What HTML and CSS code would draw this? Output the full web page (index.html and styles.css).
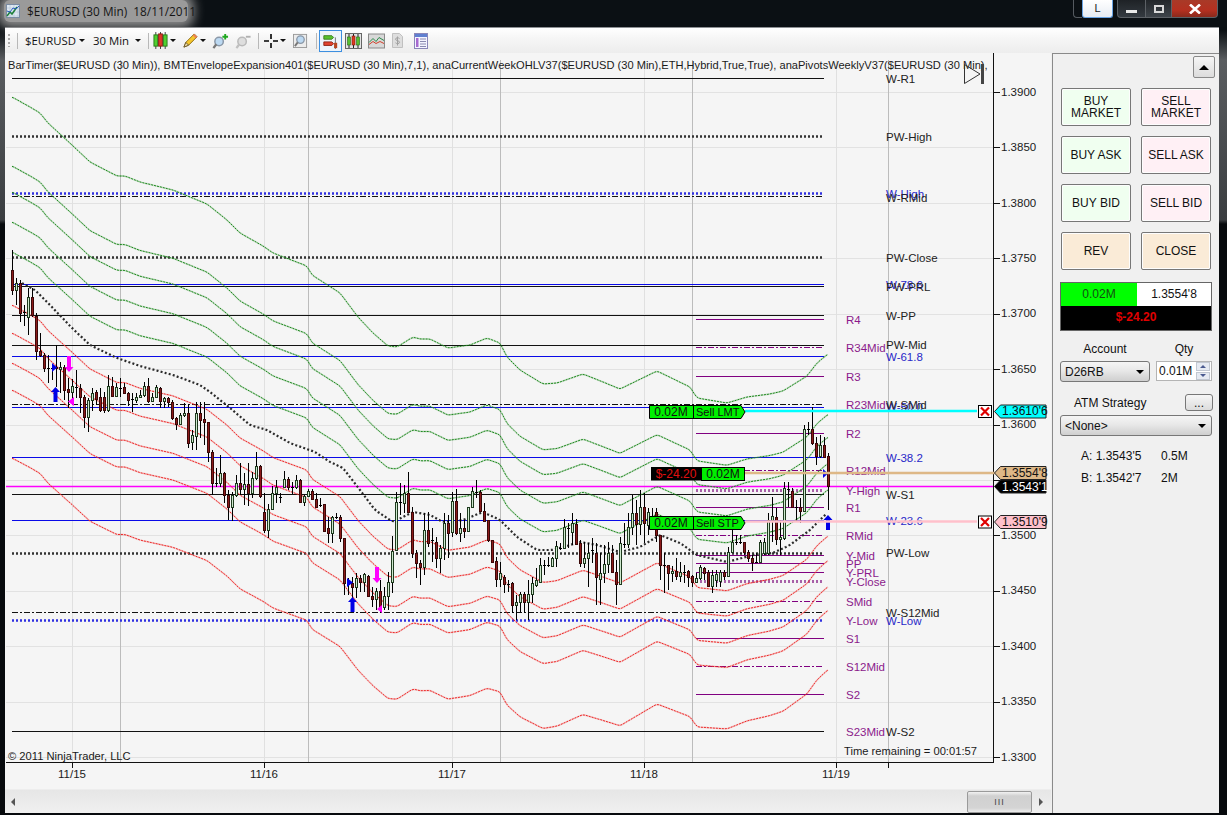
FILE: index.html
```html
<!DOCTYPE html>
<html lang="en">
<head>
<meta charset="utf-8">
<title>$EURUSD (30 Min) 18/11/2011</title>
<link rel="stylesheet" href="styles.css">
</head>
<body>
<header class="titlebar">
  <div class="title">
    <svg class="app-icon" viewBox="0 0 14 14"><rect x=".5" y=".5" width="13" height="13" fill="#dfe8f2" stroke="#7a8ca3"/><path d="M1 4h12M1 8h12M1 12h12M4 1v12M8 1v12M12 1v12" stroke="#b4c2d4" stroke-width=".6"/><path d="M1 12l3-4 2 2 5-7" fill="none" stroke="#1f7f3a" stroke-width="1.5"/><path d="M1 7l3 1 3-4 3 1 3-3" fill="none" stroke="#2b5fc0" stroke-width="1"/></svg>
    <span>$EURUSD (30 Min)&nbsp; 18/11/2011</span>
  </div>
  <div class="caption">
    <div class="cap-stub"></div>
    <div class="cap-l">L</div>
    <div class="cap-btn cap-min"><i></i></div>
    <div class="cap-btn cap-max"><i></i></div>
    <div class="cap-btn cap-close">
      <svg viewBox="0 0 12 10" width="12" height="10"><path d="M1 0.5l10 9M11 0.5l-10 9" stroke="#fff" stroke-width="2.6"/></svg>
    </div>
  </div>
</header>

<div class="window">
  <nav class="toolbar">
    <span class="grip"></span><span class="sep"></span>
    <span class="tool-text">$EURUSD</span><span class="caret c1"></span>
    <span class="tool-text t2">30 Min</span><span class="caret c2"></span>
    <span class="sep s2"></span>
    <svg class="ico w15" viewBox="0 0 16 18"><path d="M3 0v18M8 0v18M13 0v18" stroke="#333"/><rect x="1" y="3" width="4" height="12" fill="#4fd02f" stroke="#2a7a1a"/><rect x="6" y="2" width="4" height="13" fill="#e23a2a" stroke="#8a1a10"/><rect x="11" y="3" width="4" height="12" fill="#4fd02f" stroke="#2a7a1a"/></svg>
    <span class="caret"></span>
    <svg class="ico w15 gap7" viewBox="0 0 16 16"><path d="M1 15l2-5L12 1l3 3-9 9z" fill="#f6c62b" stroke="#8a6a10"/><path d="M1 15l2-5 3 3z" fill="#f2dfb0" stroke="#6a5a30"/><path d="M12 1l3 3-1.5 1.5-3-3z" fill="#ef7d5a"/></svg>
    <span class="caret"></span>
    <svg class="ico w17 gap6" viewBox="0 0 17 17"><circle cx="7" cy="9" r="4.5" fill="#bcd9f2" stroke="#8a98a8" stroke-width="1.6"/><path d="M4 12l-3 4" stroke="#777" stroke-width="2.4"/><path d="M13.5 1v6M10.5 4h6" stroke="#1fa81f" stroke-width="2"/></svg>
    <svg class="ico w17 gap6 dim" viewBox="0 0 17 17"><circle cx="7" cy="9" r="4.5" fill="#dcdcdc" stroke="#b4b4b4" stroke-width="1.6"/><path d="M4 12l-3 4" stroke="#bbb" stroke-width="2.4"/><path d="M11 4h5" stroke="#aaa" stroke-width="2"/></svg>
    <span class="sep s3"></span>
    <svg class="ico w14" viewBox="0 0 14 14"><path d="M0 7h5M9 7h5M7 0v5M7 9v5" stroke="#000" stroke-width="1.6"/></svg>
    <span class="caret"></span>
    <svg class="ico w15 gap7" viewBox="0 0 16 16"><rect x=".5" y="1.5" width="14" height="14" fill="#ececec" stroke="#999"/><circle cx="8" cy="7" r="4" fill="#bcd9f2" stroke="#8a98a8" stroke-width="1.4"/><path d="M5 10l-3 4" stroke="#777" stroke-width="2"/></svg>
    <span class="sep s4"></span>
    <span class="tool-active"><svg class="ico w17" viewBox="0 0 17 18"><path d="M1 3h9l2 2-2 2H1z" fill="#57c22e" stroke="#3a7a20"/><path d="M1 10h9l2 2-2 2H1z" fill="#e2432f" stroke="#8a2010"/><path d="M14 5v13" stroke="#666"/><rect x="12.5" y="11" width="3.5" height="6" fill="#b8451f"/></svg></span>
    <span class="icon-box"><svg class="ico w17" viewBox="0 0 17 16"><rect x=".5" y=".5" width="16" height="15" fill="#e4e4e4" stroke="#666"/><path d="M4 1v14M8.500 1v14M13 1v14" stroke="#222"/><rect x="2.500" y="4" width="3" height="8" fill="#56c030" stroke="#286a18" stroke-width=".6"/><rect x="7" y="3" width="3" height="9" fill="#e03a20" stroke="#7a1a10" stroke-width=".6"/><rect x="11.500" y="4" width="3" height="8" fill="#56c030" stroke="#286a18" stroke-width=".6"/></svg></span>
    <span class="icon-box"><svg class="ico w17" viewBox="0 0 17 15"><rect x=".5" y=".5" width="16" height="14" fill="#d8d8d8" stroke="#8a8a8a"/><path d="M1 9l4-4 3 3 3-4 5 3" fill="none" stroke="#2a8a4a"/><path d="M1 11l4-3 3 2 4-2 4 2" fill="none" stroke="#d2402a"/></svg></span>
    <span class="icon-box box-s dim"><svg class="ico w11" viewBox="0 0 11 15"><path d="M.5.500h7l3 3v11h-10z" fill="#dcdcdc" stroke="#bbb"/><path d="M7.500 5.500c-1-1-4-1-4 .7s4 1.200 4 3-3 1.800-4 .6M5.500 3.500v9" fill="none" stroke="#999"/></svg></span>
    <span class="icon-box box-l"><svg class="ico w14" viewBox="0 0 14 16"><rect x=".5" y=".5" width="13" height="15" fill="#f4f4ff" stroke="#8a86b8"/><rect x="1" y="1" width="12" height="3" fill="#5f7fd0"/><rect x="2" y="5" width="2.500" height="9" fill="#a66ad0"/><path d="M6 6h6M6 8.500h6M6 11h6M6 13.500h6" stroke="#8a8ab0"/></svg></span>
  </nav>

  <main class="main">
    <section class="chart-col">
      <div class="chart">
        <svg id="plot" class="plot" viewBox="5 53 1045 736" width="1045" height="736" xmlns="http://www.w3.org/2000/svg">
          <g id="grid"></g>
          <g id="levels"></g>
          <g id="curves"></g>
          <g id="candles"></g>
          <g id="marks"></g>

          <text class="legend" x="8" y="69">BarTimer($EURUSD (30 Min)), BMTEnvelopeExpansion401($EURUSD (30 Min),7,1), anaCurrentWeekOHLV37($EURUSD (30 Min),ETH,Hybrid,True,True), anaPivotsWeeklyV37($EURUSD (30 Min),</text>
          <path class="end-mark" d="M964.500 64.500L980 74 964.500 83.500Z"/>
          <path d="M981 64h3v20h-3z" fill="#444"/>

          <g class="lbl">
            <text class="pur" x="846" y="324">R4</text>
            <text class="pur" x="846" y="352">R34Mid</text>
            <text class="pur" x="846" y="381">R3</text>
            <text class="pur" x="846" y="409">R23Mid</text>
            <text class="pur" x="846" y="438">R2</text>
            <text class="pur" x="846" y="475">R12Mid</text>
            <text class="pur" x="846" y="495">Y-High</text>
            <text class="pur" x="846" y="512">R1</text>
            <text class="pur" x="846" y="540">RMid</text>
            <text class="pur" x="846" y="560">Y-Mid</text>
            <text class="pur" x="846" y="568">PP</text>
            <text class="pur" x="846" y="577">Y-PRL</text>
            <text class="pur" x="846" y="586">Y-Close</text>
            <text class="pur" x="846" y="606">SMid</text>
            <text class="pur" x="846" y="625">Y-Low</text>
            <text class="pur" x="846" y="643">S1</text>
            <text class="pur" x="846" y="671">S12Mid</text>
            <text class="pur" x="846" y="699">S2</text>
            <text class="pur" x="846" y="736">S23Mid</text>
            <text class="blk" x="886" y="83">W-R1</text>
            <text class="blk" x="886" y="141">PW-High</text>
            <text class="blu" x="886" y="198">W-High</text>
            <text class="blk" x="886" y="202">W-RMid</text>
            <text class="blk" x="886" y="262">PW-Close</text>
            <text class="blu" x="886" y="289">W-78.6</text>
            <text class="blk" x="886" y="291">PW-PRL</text>
            <text class="blk" x="886" y="320">W-PP</text>
            <text class="blk" x="886" y="349">PW-Mid</text>
            <text class="blu" x="886" y="361">W-61.8</text>
            <text class="blu" x="886" y="411">W-50.0</text>
            <text class="blk" x="886" y="409">W-SMid</text>
            <text class="blu" x="886" y="462">W-38.2</text>
            <text class="blk" x="886" y="499">W-S1</text>
            <text class="blu" x="886" y="525">W-23.6</text>
            <text class="blk" x="886" y="557">PW-Low</text>
            <text class="blk" x="886" y="617">W-S12Mid</text>
            <text class="blu" x="886" y="625">W-Low</text>
            <text class="blk" x="886" y="736">W-S2</text>
          </g>

          <g class="lbl axis">
            <text x="1001" y="96">1.3900</text>
            <text x="1001" y="151">1.3850</text>
            <text x="1001" y="207">1.3800</text>
            <text x="1001" y="262">1.3750</text>
            <text x="1001" y="317">1.3700</text>
            <text x="1001" y="373">1.3650</text>
            <text x="1001" y="428">1.3600</text>
            <text x="1001" y="539">1.3500</text>
            <text x="1001" y="594">1.3450</text>
            <text x="1001" y="650">1.3400</text>
            <text x="1001" y="705">1.3350</text>
            <text x="1001" y="761">1.3300</text>
            <text class="mid" x="72" y="778">11/15</text>
            <text class="mid" x="264" y="778">11/16</text>
            <text class="mid" x="452" y="778">11/17</text>
            <text class="mid" x="644" y="778">11/18</text>
            <text class="mid" x="836" y="778">11/19</text>
          </g>
          <text class="lbl-note" x="8" y="760">© 2011 NinjaTrader, LLC</text>
          <text class="lbl-note" x="844" y="755">Time remaining = 00:01:57</text>

          <g id="orders"></g>
          <g class="tag">
            <text x="671" y="416" class="mid">0.02M</text><text x="696" y="416" class="tag-s">Sell LMT</text>
            <text x="676" y="478" class="mid red">$-24.20</text><text x="723" y="478" class="mid">0.02M</text>
            <text x="671" y="527" class="mid">0.02M</text><text x="696" y="527" class="tag-s">Sell STP</text>
            <text x="1002" y="415">1.3610'6</text>
            <text x="1002" y="477">1.3554'8</text>
            <text x="1002" y="491" class="wht">1.3543'1</text>
            <text x="1002" y="526">1.3510'9</text>
          </g>
        </svg>
      </div>
      <div class="hscroll">
        <span class="arrow-l"></span>
        <span class="thumb"><b>III</b></span>
        <span class="arrow-r"></span>
      </div>
    </section>

    <aside class="side">
      <div class="collapse-row"><button class="collapse"><i></i></button></div>
      <div class="orders">
        <div class="btn buy">BUY<br>MARKET</div>
        <div class="btn sell">SELL<br>MARKET</div>
        <div class="btn buy">BUY ASK</div>
        <div class="btn sell">SELL ASK</div>
        <div class="btn buy">BUY BID</div>
        <div class="btn sell">SELL BID</div>
        <div class="btn alt">REV</div>
        <div class="btn alt">CLOSE</div>
      </div>
      <div class="pos">
        <div class="pos-qty">0.02M</div>
        <div class="pos-price">1.3554'8</div>
        <div class="pos-pnl">$-24.20</div>
      </div>
      <div class="acct">
        <label>Account</label><label>Qty</label>
        <div class="select"><span>D26RB</span><i></i></div>
        <div class="spin"><span>0.01M</span><em><u class="up"></u><u class="dn"></u></em></div>
      </div>
      <div class="atm-head"><label>ATM Strategy</label><div class="dots">...</div></div>
      <div class="select wide"><span>&lt;None&gt;</span><i></i></div>
      <div class="quotes">
        <span>A: 1.3543'5</span><span>0.5M</span>
        <span>B: 1.3542'7</span><span>2M</span>
      </div>
    </aside>
  </main>
</div>
<script src="chart.js"></script>
</body>
</html>
```
FILE: styles.css
```css
* { box-sizing: border-box; }
html, body { margin: 0; padding: 0; }
body {
  width: 1227px; height: 815px; overflow: hidden;
  font-family: "Liberation Sans", Arial, sans-serif;
  background: linear-gradient(to bottom, #0a0f13 0, #0a0f13 30px, #5a5d60 60px, #3a3d40 220px, #070a0d 224px, #070a0d 100%);
}

/* title bar */
.titlebar { height: 27px; display: flex; justify-content: space-between; background: #0b1014; }
.title {
  display: flex; align-items: center; gap: 7px; width: 184px; height: 22px; margin: 0 0 0 4px; padding-left: 2px;
  font: 11.8px "Open Sans", "Liberation Sans", sans-serif; color: #151515; white-space: nowrap;
  background: #9a9a9a; box-shadow: 0 0 11px 6px #8e8e8e; border-radius: 6px;
}
.app-icon { width: 14px; height: 14px; flex: none; }
.caption { display: flex; margin-right: 9px; height: 18px; align-items: flex-start; }
.cap-stub { width: 9px; height: 18px; border: 1px solid #555a60; border-top: 0; border-right: 0; border-radius: 0 0 0 4px; }
.cap-l {
  width: 31px; height: 18px; margin-right: 4px; text-align: center; font-size: 11px; line-height: 17px; color: #222;
  background: linear-gradient(#fff, #e8edf4); border: 1px solid #6aa5e6; border-top: 0; border-radius: 0 0 3px 3px;
}
.cap-btn { height: 18px; display: flex; align-items: center; justify-content: center; border: 1px solid #5c6166; border-top: 0; }
.cap-min { width: 28px; background: linear-gradient(#1e2226, #343a40); border-radius: 0 0 0 4px; border-right: 0; }
.cap-min i { width: 11px; height: 3px; background: #e8e8e8; margin-top: 6px; }
.cap-max { width: 27px; background: linear-gradient(#22262a, #3e444a); }
.cap-max i { width: 10px; height: 8px; border: 2px solid #d8d8d8; }
.cap-close { width: 46px; background: linear-gradient(#a83a28, #b43020 60%, #8a2a1c); border-radius: 0 0 4px 0; border-left: 0; }

/* window */
.window {
  width: 1214px; height: 786px; margin-left: 5px; background: #f0f0f0;
  border-top: 1px solid #8d9094; display: flex; flex-direction: column;
}
.toolbar {
  height: 25px; display: flex; align-items: center; padding-left: 3px; flex: none;
  background: linear-gradient(#ffffff, #f6f6f6 40%, #ededed);
  font-size: 12px; color: #111;
}
.grip { width: 2px; height: 13px; background: repeating-linear-gradient(#aaa 0 2px, transparent 2px 4px); margin-right: 7px; flex: none; }
.sep { width: 1px; height: 16px; background: #b8b8b8; margin-right: 7px; flex: none; }
.s2 { margin: 0 4px 0 7px; }
.s3 { margin: 0 5px 0 6px; }
.s4 { margin: 0 2px 0 8px; }
.tool-text { font: 11.4px "Open Sans", "Liberation Sans", sans-serif; width: 48px; white-space: nowrap; }
.t2 { margin-left: 8px; width: 37px; }
.caret { width: 0; height: 0; margin: 0 0 0 2px; border: 3px solid transparent; border-top: 3px solid #111; border-bottom: 0; flex: none; }
.c1 { margin-left: 6px; }
.c2 { margin-left: 5px; }
.ico { display: block; flex: none; }
.w11 { width: 11px; height: 15px; } .w14 { width: 14px; height: 16px; } .w15 { width: 15px; height: 17px; } .w17 { width: 17px; height: 16px; }
.gap7 { margin-left: 7px; } .gap6 { margin-left: 6px; }
.tool-active { width: 23px; height: 22px; display: flex; align-items: center; justify-content: center; border: 1px solid #3d8fe0; background: #eef4fa; flex: none; }
.icon-box { width: 23px; display: flex; justify-content: center; flex: none; }
.box-s { width: 19px; }
.box-l { width: 28px; }
.dim { opacity: .9; }
.main { flex: 1; display: flex; min-height: 0; }

/* chart */
.chart-col { width: 1046px; margin-right: 1px; display: flex; flex-direction: column; background: #ededed; }
.chart { height: 736px; background: #f5f5f5; overflow: hidden; flex: none; }
.plot { display: block; }
.legend, .lbl text, .tag text, .lbl-note { font-family: "Liberation Sans", Arial, sans-serif; font-size: 11.5px; fill: #1a1a1a; }
.legend { font-size: 11.1px; }
.lbl-note { font-size: 11.2px; }
.pur { fill: #8b1a8b !important; }
.blu { fill: #2828c8 !important; }
.blk { fill: #222 !important; }
.mid { text-anchor: middle; }
.red { fill: #e01010 !important; }
.wht { fill: #fff !important; }
.tag text { font-size: 12px; fill: #111; }
.tag .tag-s { font-size: 11px; }
.end-mark { fill: none; stroke: #333; }
.hscroll {
  flex: 1; display: flex; align-items: center; position: relative; padding: 0 8px 0 6px; background: linear-gradient(#e6e6e6, #f0f0f0);
  margin-top: 1px; border-bottom: 0;
}
.arrow-l, .arrow-r { width: 0; height: 0; border: 4px solid transparent; }
.arrow-l { border-right-color: #555; border-left: 0; }
.arrow-r { border-left-color: #555; border-right: 0; margin-left: 7px; }
.thumb {
  margin-left: auto; width: 65px; height: 22px; display: flex; align-items: center; justify-content: center;
  border: 1px solid #9a9a9a; border-radius: 2px; background: linear-gradient(#f2f2f2, #d0d0d0 20%, #d4d4d4 80%, #ececec);
  font: 9px "Liberation Sans", sans-serif; color: #444;
}
.thumb b { font-weight: 400; letter-spacing: 1px; }

/* side panel */
.side {
  width: 167px; border-left: 1px solid #8a8a8a; border-top: 1px solid #8a8a8a; background: #f0f0f0;
  font-size: 12px; color: #111; display: flex; flex-direction: column; padding: 0 6px 0 6px;
}
.collapse-row { display: flex; justify-content: flex-end; padding-top: 2px; margin-right: -2px; }
.collapse { width: 22px; height: 22px; padding: 0; display: flex; align-items: center; justify-content: center; border: 1px solid #8a8a8a; border-radius: 2px; background: linear-gradient(#f6f6f6, #dcdcdc); }
.collapse i { width: 0; height: 0; border: 5px solid transparent; border-bottom: 5px solid #000; border-top: 0; }
.orders { display: grid; grid-template-columns: 70px 70px; grid-auto-rows: 38px; column-gap: 10px; row-gap: 10px; margin: 10px 0 0 2px; }
.btn { display: flex; align-items: center; justify-content: center; text-align: center; line-height: 12px; border: 1px solid #777; border-radius: 2px; box-shadow: inset 0 0 0 1px #fdfdfd; }
.buy { background: #f0fff0; }
.sell { background: #fff0f5; }
.alt { background: #faebd7; }
.pos { display: grid; grid-template-columns: 76px 1fr; grid-template-rows: 23px 24px; width: 152px; margin: 12px 0 0 1px; border: 1px solid #666; text-align: center; line-height: 23px; }
.pos-qty { background: #00ff00; color: #124d12; }
.pos-price { background: #fff; }
.pos-pnl { grid-column: 1 / 3; background: #000; color: #e00000; font-weight: 700; }
.acct { display: grid; grid-template-columns: 90px 56px; column-gap: 6px; margin: 11px 0 0 1px; }
.acct label { text-align: center; height: 19px; }
.select {
  height: 21px; display: flex; align-items: center; justify-content: space-between; padding: 0 5px 0 4px;
  border: 1px solid #777; border-radius: 3px; background: linear-gradient(#f5f5f5, #e8e8e8 45%, #cfcfcf);
}
.select i { width: 0; height: 0; border: 4px solid transparent; border-top: 4px solid #000; border-bottom: 0; }
.spin { height: 20px; display: flex; align-items: center; justify-content: space-between; background: #fff; border: 1px solid #b4b4b4; padding-left: 2px; }
.spin em { width: 14px; height: 18px; display: flex; flex-direction: column; gap: 1px; margin-right: 1px; }
.spin u { flex: 1; display: flex; align-items: center; justify-content: center; background: #e6eaf2; border: 1px solid #c2c8d2; }
.spin u::after { content: ""; width: 0; height: 0; border: 3px solid transparent; }
.spin .up::after { border-bottom: 3px solid #4a5a90; border-top: 0; }
.spin .dn::after { border-top: 3px solid #4a5a90; border-bottom: 0; }
.atm-head { display: flex; justify-content: space-between; align-items: center; margin: 12px 0 4px 1px; height: 17px; padding-left: 14px; }
.dots { width: 28px; height: 17px; text-align: center; line-height: 17px; border: 1px solid #777; border-radius: 3px; background: linear-gradient(#f6f6f6, #dcdcdc); }
.wide { width: 152px; margin-left: 1px; }
.quotes { display: grid; grid-template-columns: 80px 1fr; row-gap: 8px; margin: 13px 0 0 22px; line-height: 14px; }
```
FILE: chart.js
```js
(function () {
  var NS = 'http://www.w3.org/2000/svg';
  function el(parent, name, attrs) {
    var n = document.createElementNS(NS, name);
    for (var k in attrs) n.setAttribute(k, attrs[k]);
    document.getElementById(parent).appendChild(n);
    return n;
  }

  /* grid */
  var i;
  for (i = 0; i <= 12; i++) {
    var gy = Math.round(92 + 55.42 * i) + .5;
    el('grid', 'path', { d: 'M6 ' + gy + 'H993', stroke: '#e2e2e2', fill: 'none' });
  }
  [72, 264, 452, 644, 836].forEach(function (x) {
    el('grid', 'path', { d: 'M' + (x + .5) + ' 60V762', stroke: '#e0e0e0' });
    el('grid', 'path', { d: 'M' + (x + .5) + ' 762V768', stroke: '#111' });
  });
  [120, 308, 500, 692, 888].forEach(function (x) {
    el('grid', 'path', { d: 'M' + (x + .5) + ' 60V762', stroke: '#bcbcbc' });
  });
  el('grid', 'path', { d: 'M888.500 762V768', stroke: '#111' });
  el('grid', 'path', { d: 'M993.500 53V763M6 762.500H993', stroke: '#111', fill: 'none' });
  for (i = 0; i <= 12; i++) {
    var ty = Math.round(92 + 55.42 * i) + .5;
    el('grid', 'path', { d: 'M993 ' + ty + 'H1000', stroke: '#111' });
  }

  /* horizontal levels: y, x0, x1, style */
  var S = {
    k: { stroke: '#111', 'stroke-width': 1.2 },
    b: { stroke: '#0a0ae8', 'stroke-width': 1.2 },
    kd: { stroke: '#111', 'stroke-dasharray': '6 2 2 2' },
    kt: { stroke: '#333', 'stroke-width': 2.6, 'stroke-dasharray': '2 2' },
    bt: { stroke: '#3030e0', 'stroke-width': 2.6, 'stroke-dasharray': '2 2' },
    m: { stroke: '#ff00ff', 'stroke-width': 1.4 },
    p: { stroke: '#800080', 'stroke-width': 1.2 },
    pd: { stroke: '#800080', 'stroke-dasharray': '6 2 2 2' },
    pt: { stroke: '#a860a8', 'stroke-width': 3, 'stroke-dasharray': '2 2' }
  };
  [
    [78, 'k'], [136, 'kt'], [193, 'bt'], [196, 'kd'], [257, 'kt'], [284, 'b'], [286, 'k'],
    [315, 'k'], [345, 'k'], [356, 'b'], [404, 'kd'], [407, 'b'], [457, 'b'],
    [494, 'k'], [520, 'b'], [553, 'kt'], [612, 'kd'], [620, 'bt'], [731, 'k'],
    [319, 'p', 696], [347, 'pd', 696], [376, 'p', 696], [433, 'p', 696], [470, 'pd', 696],
    [490, 'pt', 696], [507, 'p', 696], [535, 'pd', 696], [555, 'p', 696], [563, 'p', 696],
    [572, 'p', 696], [581, 'pt', 696], [601, 'pd', 696], [638, 'p', 696], [666, 'pd', 696], [694, 'p', 696]
  ].forEach(function (l) {
    var a = { d: 'M' + (l[2] || 12) + ' ' + (l[0] + .5) + 'H824', fill: 'none' };
    for (var k in S[l[1]]) a[k] = S[l[1]][k];
    el('levels', 'path', a);
  });
  el('levels', 'path', { d: 'M6 486.500H993', fill: 'none', stroke: '#ff00ff', 'stroke-width': 1.4 });

  /* envelope curves */
  var TOP = [[12,97],[30,107],[40,113],[48,123],[72,145],[90,162],[117,176],[125,176],[140,182],[173,190],[190,197],[207,204],[227,220],[240,233],[263,246],[273,253],[307,266],[312,275],[340,293],[358,317],[373,333],[388,346],[397,347],[413,337],[420,339],[430,339],[448,348],[470,345],[487,338],[500,343],[507,357],[520,370],[543,384],[557,383],[583,374],[603,382],[620,389],[657,371],[690,387],[697,398],[727,403],[747,397],[770,394],[783,391],[807,376],[817,363],[828,354]];
  var MID = [[22,283],[35,290],[50,305],[72,328],[90,345],[117,358],[140,366],[173,375],[200,385],[210,392],[230,408],[250,425],[267,430],[290,443],[315,452],[330,462],[343,468],[360,490],[375,510],[393,522],[413,512],[430,515],[443,522],[463,520],[483,512],[500,520],[517,537],[537,550],[553,550],[580,542],[597,545],[620,552],[640,547],[660,535],[680,543],[697,555],[727,562],[753,555],[773,553],[790,545],[810,530],[827,513]];
  function at(pts, x) {
    for (var j = 1; j < pts.length; j++) {
      if (x <= pts[j][0]) {
        var a = pts[j - 1], b = pts[j];
        return a[1] + (b[1] - a[1]) * (x - a[0]) / (b[0] - a[0]);
      }
    }
    return pts[pts.length - 1][1];
  }
  function scale(x) { return x < 487 ? 1 - .000063 * (x - 12) : .97 - .00028 * (x - 487); }
  function smooth(pts, x) { return (at(pts, Math.max(x - 2, pts[0][0])) + at(pts, x) * 2 + at(pts, Math.min(x + 2, pts[pts.length - 1][0]))) / 4; }
  function curve(off, color) {
    var d = '';
    for (var x = 12; x <= 828; x += 2) {
      d += (d ? 'L' : 'M') + x + ' ' + (smooth(TOP, x) + off * scale(x)).toFixed(1);
    }
    el('curves', 'path', { d: d, fill: 'none', stroke: color, 'stroke-width': 1.8, opacity: .18 });
    el('curves', 'path', { d: d, fill: 'none', stroke: color, 'stroke-width': 1, 'stroke-dasharray': '2 1' });
  }
  [0, 69, 95, 125, 155].forEach(function (o) { curve(o, '#1f8a1f'); });
  [208, 236, 266, 293, 361].forEach(function (o) { curve(o, '#ee2a2a'); });
  var dm = '';
  for (var mx = 22; mx <= 827; mx += 2) dm += (dm ? 'L' : 'M') + mx + ' ' + smooth(MID, mx).toFixed(1);
  el('curves', 'path', { d: dm, fill: 'none', stroke: '#2a2a2a', 'stroke-width': 2.2, 'stroke-dasharray': '2 2.2' });

  /* candles: direction (1 up, 0 down), body top, body bottom, high, low */
  var C = [
    [0,270,290,250,295],[1,283,290,278,305],[0,283,313,280,322],[0,312,312,305,326],[1,297,317,288,335],[0,297,315,288,317],
    [0,316,351,313,360],[0,351,355,333,357],[0,355,368,353,372],[0,368,368,355,383],[0,368,368,365,380],[0,367,368,345,387],
    [1,367,369,362,393],[0,367,390,365,400],[0,389,392,378,408],[1,386,392,379,400],[0,387,387,370,398],[0,388,397,384,413],
    [0,397,417,395,428],[1,400,417,398,432],[1,393,400,388,411],[0,392,399,390,405],[0,397,410,388,412],[0,397,410,392,413],
    [1,386,410,375,412],[0,386,396,377,397],[1,387,396,383,397],[0,388,388,378,397],[0,387,393,383,394],[0,393,400,392,406],
    [0,399,399,393,412],[1,397,400,393,403],[1,395,397,390,398],[1,386,395,382,397],[0,386,401,378,403],[1,397,401,393,402],
    [1,387,397,385,398],[0,388,401,387,408],[1,398,401,397,408],[0,398,402,397,407],[0,402,418,400,420],[0,418,424,417,430],
    [1,415,424,413,425],[1,413,415,403,417],[0,413,443,404,448],[1,435,442,430,450],[1,413,436,402,450],[0,413,420,402,438],
    [0,419,422,402,445],[0,422,452,422,462],[0,452,483,450,495],[0,483,483,468,487],[1,473,483,455,487],[0,473,495,472,503],
    [0,495,507,490,520],[1,495,507,492,521],[1,483,495,475,497],[0,483,489,463,495],[1,484,489,473,505],[0,484,493,463,506],
    [1,478,493,472,498],[1,466,478,452,480],[0,466,496,465,498],[0,512,530,493,533],[1,509,530,504,538],[1,493,509,486,510],
    [1,487,493,480,503],[0,497,497,493,503],[1,479,487,471,488],[0,479,487,477,490],[0,487,487,482,494],[1,480,487,475,489],
    [0,480,502,479,503],[1,496,502,495,506],[1,491,496,489,497],[0,491,499,489,499],[0,499,507,493,508],[0,505,505,498,507],
    [0,504,531,504,531],[0,528,533,517,543],[1,517,533,516,543],[0,517,517,513,519],[0,517,538,515,542],[0,538,583,538,595],
    [0,583,583,578,595],[0,583,587,577,599],[1,578,587,573,598],[0,578,582,575,592],[1,574,582,573,592],[0,576,596,575,597],
    [0,596,599,587,607],[1,591,599,588,610],[0,591,608,580,613],[1,596,607,587,610],[1,582,596,572,610],[1,551,582,536,593],
    [1,502,550,492,551],[0,502,502,483,515],[1,493,503,485,513],[0,493,512,472,513],[0,512,553,507,558],[0,553,563,550,578],
    [0,563,567,560,585],[1,530,567,513,575],[0,530,543,512,547],[0,540,540,528,562],[0,542,558,537,568],[1,548,558,545,573],
    [1,523,548,513,560],[0,523,533,515,558],[1,501,532,492,537],[0,501,533,489,535],[1,528,533,513,542],[0,528,531,520,538],
    [1,507,531,507,532],[1,491,507,487,508],[0,492,492,480,498],[0,492,511,490,512],[0,511,521,503,522],[0,520,540,520,542],
    [0,540,562,540,563],[0,561,579,557,587],[1,573,579,562,587],[0,577,584,575,593],[0,584,584,580,592],[0,583,605,582,613],
    [1,602,605,595,620],[1,594,602,592,612],[0,594,602,592,613],[1,594,602,580,620],[1,583,594,577,603],[1,580,585,568,587],
    [1,565,582,558,583],[0,565,565,560,575],[0,565,565,557,567],[1,558,566,557,567],[1,546,558,541,567],[0,548,548,543,550],
    [1,527,548,519,548],[0,528,528,523,548],[1,523,532,513,545],[0,524,544,519,545],[0,543,563,540,567],[1,558,563,542,568],
    [1,553,558,543,587],[0,550,550,538,563],[0,553,577,543,605],[1,573,579,553,605],[1,564,573,545,583],[1,553,564,542,573],
    [0,553,572,545,572],[0,572,584,560,605],[1,543,584,537,585],[0,544,544,523,548],[1,527,544,513,548],[1,513,527,495,535],
    [0,513,524,500,545],[1,507,524,490,535],[0,507,523,493,543],[1,512,525,508,535],[0,516,516,508,530],[0,512,535,508,542],
    [0,535,565,535,580],[0,565,565,553,593],[0,565,573,565,590],[1,571,573,566,582],[0,571,576,558,580],[1,572,576,562,582],
    [0,572,572,565,583],[0,571,577,570,587],[0,576,582,575,587],[1,578,582,573,583],[1,567,578,565,580],[0,568,573,567,580],
    [0,572,586,570,587],[1,575,586,570,593],[1,574,580,570,587],[1,572,581,570,587],[0,572,576,570,580],[1,552,576,547,577],
    [1,542,552,530,552],[0,542,542,535,545],[0,542,542,535,544],[0,542,552,542,555],[0,552,558,550,562],[0,558,562,555,571],
    [0,562,562,553,563],[1,542,562,540,563],[1,542,553,538,555],[1,520,553,513,555],[1,516,520,497,542],[0,517,539,508,545],
    [1,537,539,520,555],[1,488,538,482,540],[0,489,489,482,507],[0,491,507,488,508],[0,507,507,500,522],[0,507,511,498,523],
    [1,429,511,425,511],[0,429,429,422,435],[0,429,443,407,445],[0,443,456,437,465],[1,445,456,435,458],[0,445,457,437,458],
    [0,456,486,453,510]
  ];
  var wick = '';
  C.forEach(function (c, n) { wick += 'M' + (12.5 + 4 * n) + ' ' + c[3] + 'V' + c[4]; });
  el('candles', 'path', { d: wick, stroke: '#000', fill: 'none', 'shape-rendering': 'crispEdges' });
  C.forEach(function (c, n) {
    var x = 12.5 + 4 * n;
    if (c[1] === c[2]) {
      el('candles', 'path', { d: 'M' + (x - 1.5) + ' ' + (c[1] + .5) + 'h3', stroke: '#000', 'shape-rendering': 'crispEdges' });
    } else {
      el('candles', 'rect', {
        x: x - 1, y: c[1] + .5, width: 2, height: c[2] - c[1],
        fill: c[0] ? '#cfe9cf' : '#8b1a1a', stroke: c[0] ? '#1e3a1e' : '#3a0808', 'shape-rendering': 'crispEdges'
      });
    }
  });

  /* arrows */
  function up(x, t, b, col) {
    el('marks', 'path', { d: 'M' + x + ' ' + t + 'l4.500 5h-2.500V' + b + 'h-4V' + (t + 5) + 'h-2.500z', fill: col });
  }
  function down(x, t, b, col) {
    el('marks', 'path', { d: 'M' + x + ' ' + b + 'l4.500 -5h-2.500V' + t + 'h-4V' + (b - 5) + 'h-2.500z', fill: col });
  }
  function tri(d, col) { el('marks', 'path', { d: d, fill: col }); }
  up(55.5, 387, 402, '#0000e6'); down(69, 356, 372, '#ff00ff');
  tri('M52 363l5 4.500-5 4.500z', '#0000e6'); tri('M74 397v9l-6-4.500z', '#ff00ff');
  up(352.5, 597, 612, '#0000e6'); down(377, 567, 583, '#ff00ff');
  tri('M347 578l6 4.500-6 4.500z', '#0000e6'); tri('M382 605v8l-5-4z', '#ff00ff');
  up(828, 515, 530, '#0000e6'); tri('M823 469l5 4.500-5 4.500z', '#0000e6');

  /* orders */
  function rail(y, x0, color, w) { el('orders', 'path', { d: 'M' + x0 + ' ' + y + 'H977', stroke: color, 'stroke-width': w }); }
  rail(411, 745, '#00ffff', 2.4);
  rail(521.5, 745, '#ffc0cb', 2.4);
  el('orders', 'path', { d: 'M745 473H995', stroke: '#deb887', 'stroke-width': 2.4 });
  function orderTag(y) {
    el('orders', 'path', { d: 'M649.500 ' + y + 'H741l4 6.500-4 6.500H649.500z', fill: '#00f000', stroke: '#000' });
    el('orders', 'path', { d: 'M693.500 ' + y + 'v13', stroke: '#000' });
  }
  orderTag(405.5); orderTag(516.5);
  el('orders', 'rect', { x: 651, y: 467, width: 50, height: 13.5, fill: '#000' });
  el('orders', 'rect', { x: 701.5, y: 467.5, width: 43, height: 13, fill: '#00f000', stroke: '#000' });
  [[405.5, 417.5], [516, 528]].forEach(function (b) {
    el('orders', 'rect', { x: 978.5, y: b[0], width: 13, height: b[1] - b[0], fill: '#fff', stroke: '#000' });
    el('orders', 'path', { d: 'M981 ' + (b[0] + 2) + 'L989 ' + (b[1] - 2) + 'M989 ' + (b[0] + 2) + 'L981 ' + (b[1] - 2), stroke: '#e00000', 'stroke-width': 2.2 });
  });
  function priceTag(y, col) {
    el('orders', 'path', { d: 'M994.500 ' + (y + 7) + 'l6 -6.500H1046v13H1000.500z', fill: col, stroke: '#222' });
  }
  priceTag(404.5, '#00ffff');
  priceTag(466, '#deb887');
  priceTag(479.5, '#000');
  priceTag(515, '#ffc0cb');
})();
```
